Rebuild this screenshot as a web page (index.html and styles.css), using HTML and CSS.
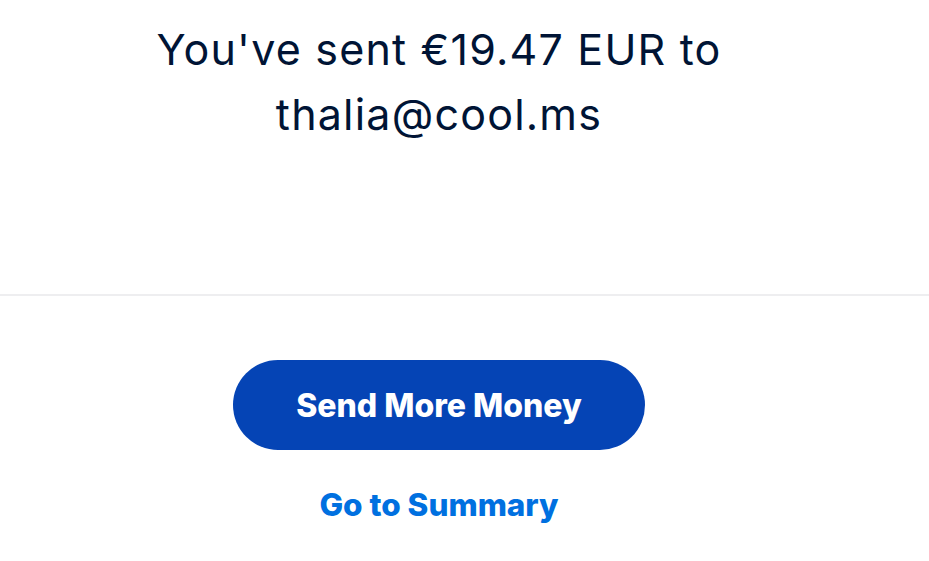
FILE: index.html
```html
<!DOCTYPE html>
<html>
<head>
<meta charset="utf-8">
<link rel="stylesheet" href="styles.css">
</head>
<body>
<div class="page">
  <section class="top">
    <h1 class="title">You've sent €19.47 EUR to<br>thalia@cool.ms</h1>
  </section>
  <hr class="divider">
  <section class="actions">
    <button class="primary">Send More Money</button>
    <a class="link" href="#">Go to Summary</a>
  </section>
</div>
</body>
</html>
```
FILE: styles.css
```css
html, body {
  margin: 0;
  padding: 0;
  background: #ffffff;
}
body {
  font-family: Inter, "Noto Sans", sans-serif;
  color: #001435;
}
.page {
  width: 100%;
}
.top {
  width: 878px;
  display: flex;
  justify-content: center;
  padding-top: 17px;
  height: 294px;
  box-sizing: border-box;
}
.title {
  margin: 0;
  font-size: 43px;
  font-weight: 400;
  line-height: 65px;
  text-align: center;
  letter-spacing: 1.2px;
}
.divider {
  margin: 0;
  border: 0;
  height: 2px;
  background: #eeeef0;
}
.actions {
  width: 878px;
  display: flex;
  flex-direction: column;
  align-items: center;
  padding-top: 64px;
}
.primary {
  width: 412px;
  height: 90px;
  border: 0;
  border-radius: 45px;
  background: #0544b5;
  color: #ffffff;
  font-family: Inter, "Noto Sans", sans-serif;
  font-weight: 800;
  font-size: 32px;
}
.link {
  margin-top: 35px;
  color: #0070e0;
  font-weight: 800;
  font-size: 31.5px;
  text-decoration: none;
}
```
